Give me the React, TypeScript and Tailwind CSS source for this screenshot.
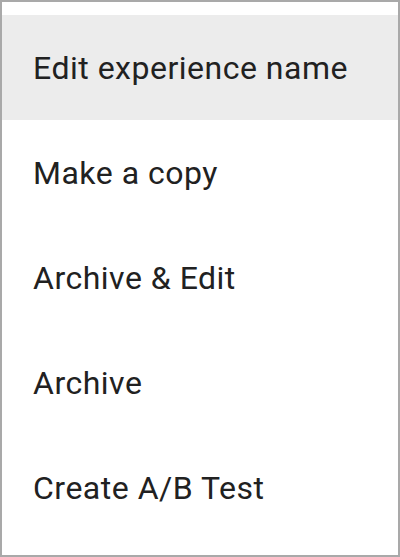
import React from 'react'

const items = [
  'Edit experience name',
  'Make a copy',
  'Archive & Edit',
  'Archive',
  'Create A/B Test',
]

const App = () => {
  return (
    <div className="w-[400px] h-[557px] bg-white border-2 border-[#a9a9a9] pt-[13px] font-['Roboto',sans-serif]">
      <ul className="flex flex-col">
        {items.map((label, i) => (
          <li
            key={label}
            className={`h-[105px] flex items-center pl-[31px] text-[32px] tracking-[0.5px] text-[#212121] ${
              i === 0 ? 'bg-[#ececec]' : ''
            }`}
          >
            {label}
          </li>
        ))}
      </ul>
    </div>
  )
}

export default App
